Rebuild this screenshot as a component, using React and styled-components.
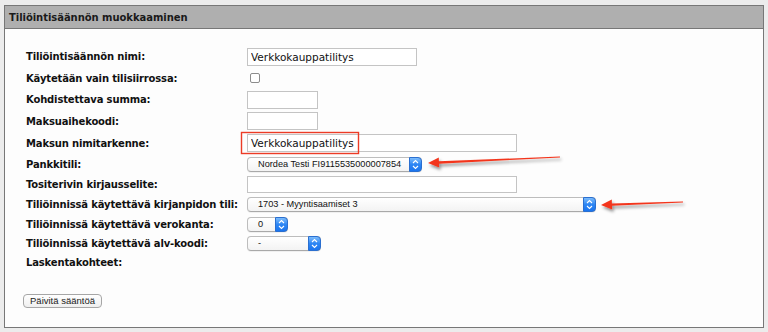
import styled, { createGlobalStyle } from 'styled-components';

const GlobalStyle = createGlobalStyle`
  html, body {
    margin: 0;
    padding: 0;
    background: #ececec;
  }
  * {
    box-sizing: border-box;
  }
`;

// lomakkeen rivit: korkeus pikseleinä ja sisältö
const rows = [
  { label: 'Tiliöintisäännön nimi:', h: 21, kind: 'input', w: 170, ih: 18, value: 'Verkkokauppatilitys' },
  { label: 'Käytetään vain tilisiirrossa:', h: 22, kind: 'check' },
  { label: 'Kohdistettava summa:', h: 21, kind: 'input', w: 71, ih: 18, value: '' },
  { label: 'Maksuaihekoodi:', h: 22, kind: 'input', w: 71, ih: 18, value: '' },
  { label: 'Maksun nimitarkenne:', h: 22, kind: 'input', w: 270, ih: 18, value: 'Verkkokauppatilitys' },
  { label: 'Pankkitili:', h: 20, kind: 'select', w: 175, value: 'Nordea Testi FI9115535000007854' },
  { label: 'Tositerivin kirjausselite:', h: 20, kind: 'input', w: 270, ih: 17, value: '' },
  { label: 'Tiliöinnissä käytettävä kirjanpidon tili:', h: 20, kind: 'select', w: 349, value: '1703 - Myyntisaamiset 3' },
  { label: 'Tiliöinnissä käytettävä verokanta:', h: 20, kind: 'select', w: 41, value: '0' },
  { label: 'Tiliöinnissä käytettävä alv-koodi:', h: 19, kind: 'select', w: 74, value: '-' },
  { label: 'Laskentakohteet:', h: 19, kind: 'none' },
];

// nuolen monikulmio: ohut häntä, paksumpi varsi ja kärki
function arrowPoints(tx, ty, hx, hy) {
  const dx = hx - tx;
  const dy = hy - ty;
  const len = Math.sqrt(dx * dx + dy * dy);
  const ux = dx / len;
  const uy = dy / len;
  const nx = -uy;
  const ny = ux;
  const headLen = 11;
  const headW = 5;
  const bx = hx - ux * headLen;
  const by = hy - uy * headLen;
  const p = (x, y) => `${x.toFixed(1)},${y.toFixed(1)}`;
  return [
    p(tx + nx * 0.4, ty + ny * 0.4),
    p(bx + nx * 1.2, by + ny * 1.2),
    p(bx + nx * headW, by + ny * headW),
    p(hx, hy),
    p(bx - nx * headW, by - ny * headW),
    p(bx - nx * 1.2, by - ny * 1.2),
    p(tx - nx * 0.4, ty - ny * 0.4),
  ].join(' ');
}

function Stepper() {
  return (
    <StepButton>
      <svg width="7" height="11" viewBox="0 0 7 11">
        <path d="M1 4 L3.5 1.5 L6 4 M1 7 L3.5 9.5 L6 7" fill="none" stroke="#fff" strokeWidth="1.1" />
      </svg>
    </StepButton>
  );
}

function Field({ row }) {
  if (row.kind === 'input') {
    return <TextInput $w={row.w} $h={row.ih} defaultValue={row.value} readOnly />;
  }
  if (row.kind === 'check') {
    return <CheckBox type="checkbox" />;
  }
  if (row.kind === 'select') {
    return (
      <SelectShell $w={row.w}>
        <SelectText>{row.value}</SelectText>
        <Stepper />
      </SelectShell>
    );
  }
  return null;
}

function App() {
  return (
    <Page>
      <GlobalStyle />
      <Panel>
        <PanelHeader>Tiliöintisäännön muokkaaminen</PanelHeader>
        <PanelBody>
          <FormGrid>
            {rows.map((row) => (
              <FormRow key={row.label} $h={row.h}>
                <Label>{row.label}</Label>
                <FieldCell>
                  <Field row={row} />
                </FieldCell>
              </FormRow>
            ))}
          </FormGrid>
          <SubmitButton type="button">Päivitä sääntöä</SubmitButton>
        </PanelBody>
      </Panel>
      <Annotations width="768" height="332" viewBox="0 0 768 332">
        <defs>
          <filter id="shade" x="-20%" y="-100%" width="140%" height="300%">
            <feDropShadow dx="1.5" dy="2.5" stdDeviation="1.6" floodColor="#000" floodOpacity="0.45" />
          </filter>
        </defs>
        <rect x="241.5" y="132.5" width="117" height="21" fill="none" stroke="#ec3b26" strokeWidth="1.4" />
        <g filter="url(#shade)" fill="#f3361d">
          <polygon points={arrowPoints(560, 157, 428, 163)} />
          <polygon points={arrowPoints(683, 202, 601, 205)} />
        </g>
      </Annotations>
    </Page>
  );
}

const Page = styled.div`
  position: relative;
  width: 768px;
  height: 332px;
  padding: 5px 0 0 4px;
  background: #ececec;
`;

const Panel = styled.div`
  width: 760px;
  height: 323px;
  border: 1px solid #777;
  background: #fdfdfd;
`;

const PanelHeader = styled.div`
  height: 23px;
  padding: 0 0 0 4px;
  display: flex;
  align-items: center;
  background: #afafaf;
  border-bottom: 1px solid #777;
  font-family: 'DejaVu Sans', Verdana, sans-serif;
  font-weight: bold;
  font-size: 10px;
  letter-spacing: -0.05px;
  color: #1a1a1a;
`;

const PanelBody = styled.div`
  padding: 17px 0 0 21px;
`;

const FormGrid = styled.div`
  display: flex;
  flex-direction: column;
`;

const FormRow = styled.div`
  display: grid;
  grid-template-columns: 221px 1fr;
  align-items: center;
  height: ${(p) => p.$h}px;
`;

const Label = styled.span`
  font-family: 'DejaVu Sans', Verdana, sans-serif;
  font-weight: bold;
  font-size: 10px;
  letter-spacing: -0.15px;
  color: #111;
  white-space: nowrap;
`;

const FieldCell = styled.div`
  display: flex;
  align-items: center;
`;

const TextInput = styled.input`
  width: ${(p) => p.$w}px;
  height: ${(p) => p.$h}px;
  margin: 0;
  padding: 0 3px;
  border: 1px solid #c4c4c4;
  background: #fff;
  font-family: 'DejaVu Sans', Verdana, sans-serif;
  font-size: 10.5px;
  color: #111;
  outline: none;
`;

const CheckBox = styled.input`
  appearance: none;
  width: 10px;
  height: 10px;
  margin: 0 0 0 3px;
  border: 1px solid #8c8c8c;
  border-radius: 2px;
  background: #fff;
`;

const SelectShell = styled.div`
  display: flex;
  width: ${(p) => p.$w}px;
  height: 15px;
  border: 1px solid #bdbdbd;
  border-bottom-color: #a9a9a9;
  border-radius: 4px;
  background: linear-gradient(#ffffff, #f3f3f3);
  box-shadow: 0 1px 0 rgba(0, 0, 0, 0.05);
`;

const SelectText = styled.span`
  flex: 1;
  padding-left: 10px;
  font-family: 'Liberation Sans', Arial, sans-serif;
  font-size: 9.2px;
  line-height: 13px;
  color: #111;
  white-space: nowrap;
  overflow: hidden;
`;

const StepButton = styled.span`
  width: 13px;
  margin: -1px -1px -1px 0;
  display: flex;
  align-items: center;
  justify-content: center;
  border-radius: 0 4px 4px 0;
  background: linear-gradient(#7cbcfc, #2d86f4 50%, #1a74ee);
  border: 1px solid #2a6fd0;
`;

const SubmitButton = styled.button`
  display: block;
  margin: 22px 0 0 -3px;
  width: 79px;
  height: 14px;
  padding: 0;
  border: 1px solid #a6a6a6;
  border-radius: 4px;
  background: linear-gradient(#ffffff, #efefef);
  font-family: 'Liberation Sans', Arial, sans-serif;
  font-size: 9.5px;
  line-height: 12px;
  color: #222;
`;

const Annotations = styled.svg`
  position: absolute;
  left: 0;
  top: 0;
  pointer-events: none;
`;

export default App;
